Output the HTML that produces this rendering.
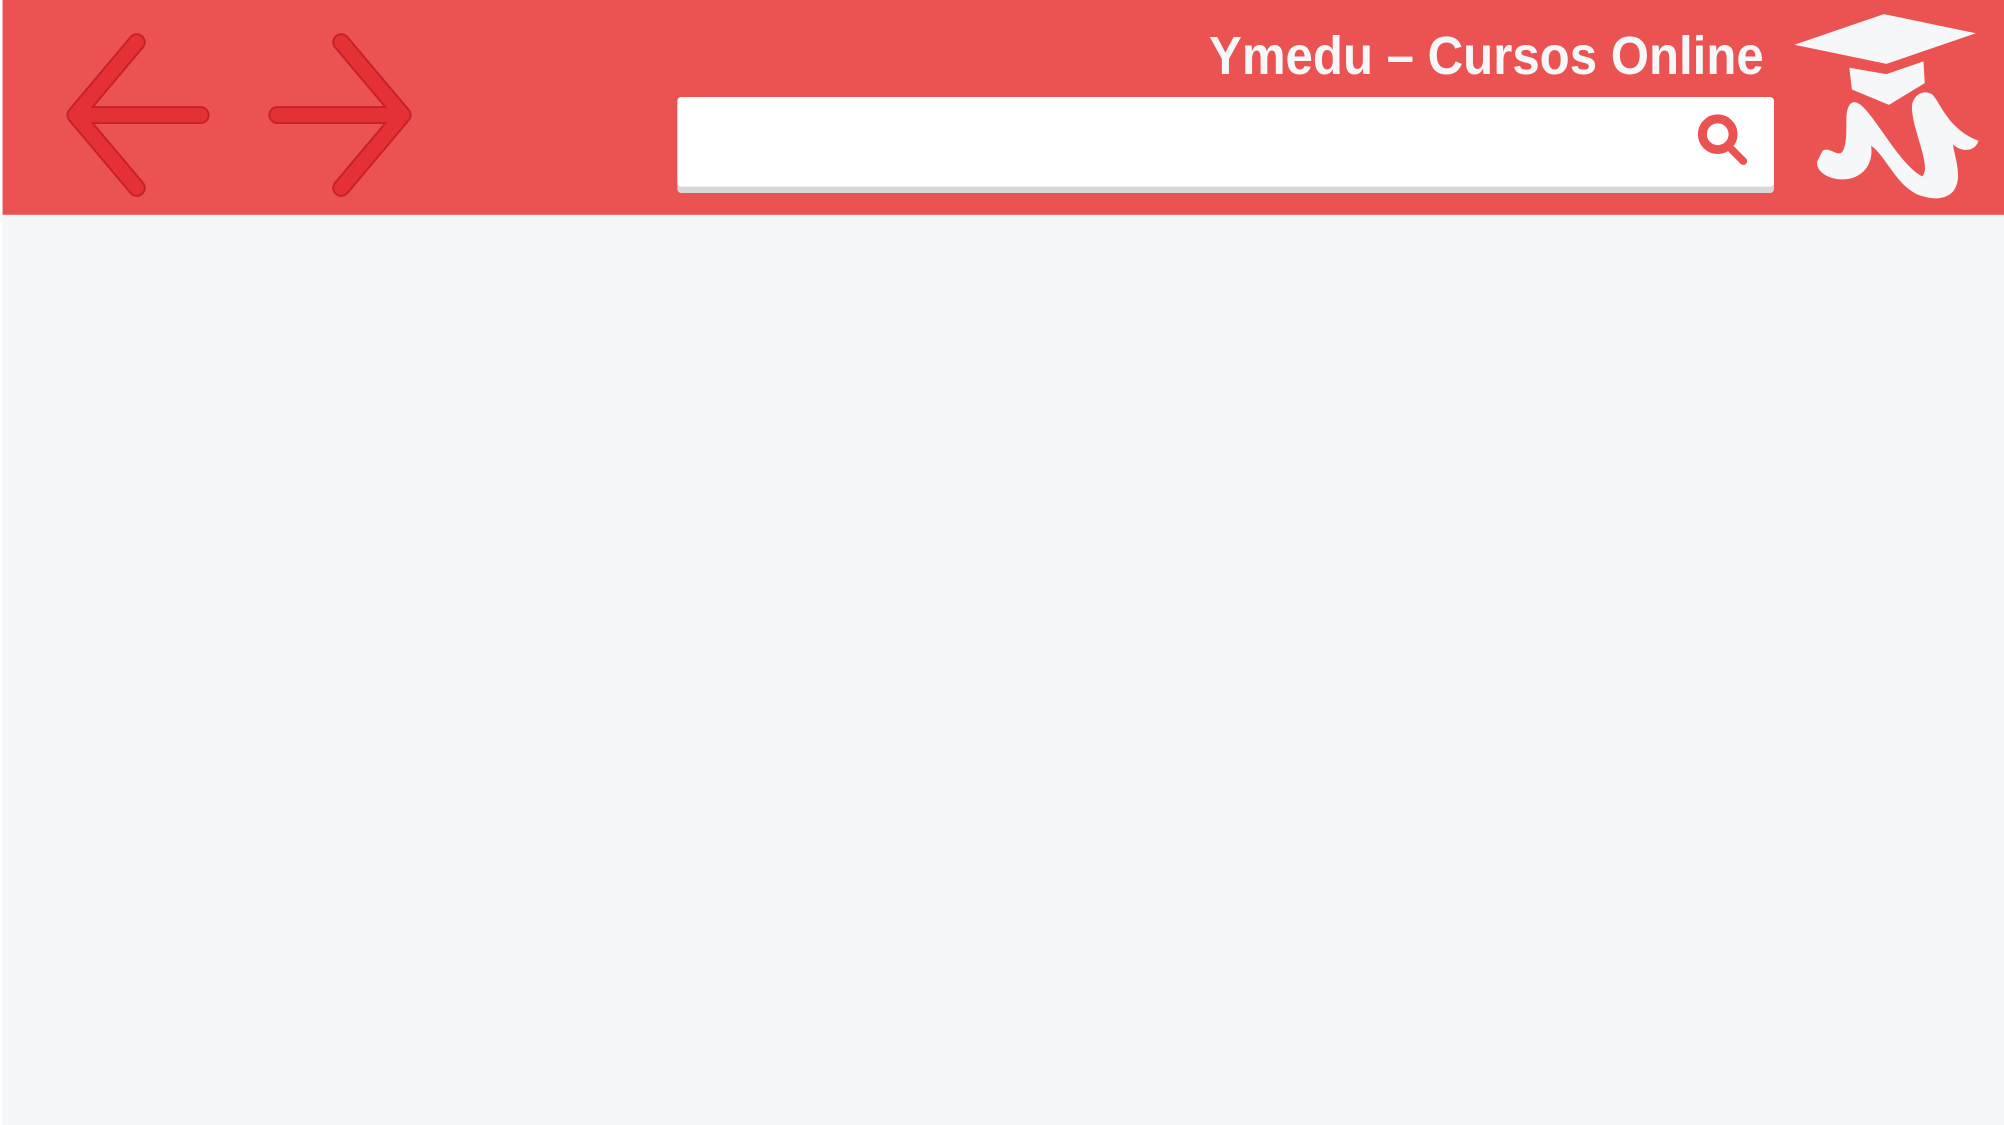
<!DOCTYPE html>
<html><head><meta charset="utf-8"><style>
html,body{margin:0;padding:0;background:#F5F7F9;}
svg{display:block}
</style></head><body>
<svg width="2004" height="1125" viewBox="0 0 1568 880" preserveAspectRatio="none" xmlns="http://www.w3.org/2000/svg">
<rect x="0" y="0" width="1568" height="880" fill="#F5F7F9"/>
<rect x="0" y="0" width="2" height="880" fill="#ffffff"/>
<rect x="2" y="0" width="1566" height="168" fill="#EB5252"/>
<g fill="none" stroke-linecap="round" stroke-linejoin="round">
<path d="M107,33 L59,90 L107,147 M59,90 L157,90" stroke="#C8202A" stroke-width="14"/>
<path d="M107,33 L59,90 L107,147 M59,90 L157,90" stroke="#E53035" stroke-width="11"/>
<path d="M267,33 L315,90 L267,147 M315,90 L217,90" stroke="#C8202A" stroke-width="14"/>
<path d="M267,33 L315,90 L267,147 M315,90 L217,90" stroke="#E53035" stroke-width="11"/>
</g>
<rect x="530" y="76" width="858" height="75" rx="3" fill="#D8D8D8"/>
<rect x="530" y="76" width="858" height="70" rx="3" fill="#ffffff"/>
<circle cx="1344" cy="105" r="12" fill="none" stroke="#EB5252" stroke-width="7"/>
<path d="M1355,117 L1364,126" stroke="#EB5252" stroke-width="6" stroke-linecap="round"/>
<text x="1380" y="58" text-anchor="end" font-family="Liberation Sans Narrow, Liberation Sans, sans-serif" font-weight="bold" font-size="42" fill="#F5F7F9" textLength="434" lengthAdjust="spacingAndGlyphs">Ymedu – Cursos Online</text>
<g fill="#F5F7F9">
<path d="M1404,35 L1474,11 L1546,26 L1476,50 Z"/>
<path d="M1447,53 L1476,58 L1505,48 L1506,65 L1478,82 L1449,70 Z"/>
<path d="M1426,118 C1432,114 1438,124 1442,118 C1446,110 1444,95 1445,88 C1447,78 1452,78 1458,84 C1470,96 1488,130 1504,138 C1512,130 1495,100 1496,82 C1498,73 1506,70 1512,74 C1518,80 1525,102 1548,110 C1546,118 1536,120 1528,113 C1530,125 1536,140 1528,150 C1520,158 1508,155 1500,152 C1484,145 1474,120 1464,114 C1466,128 1458,138 1446,140 C1432,142 1420,134 1422,126 Z"/>
</g>
</svg>
</body></html>
